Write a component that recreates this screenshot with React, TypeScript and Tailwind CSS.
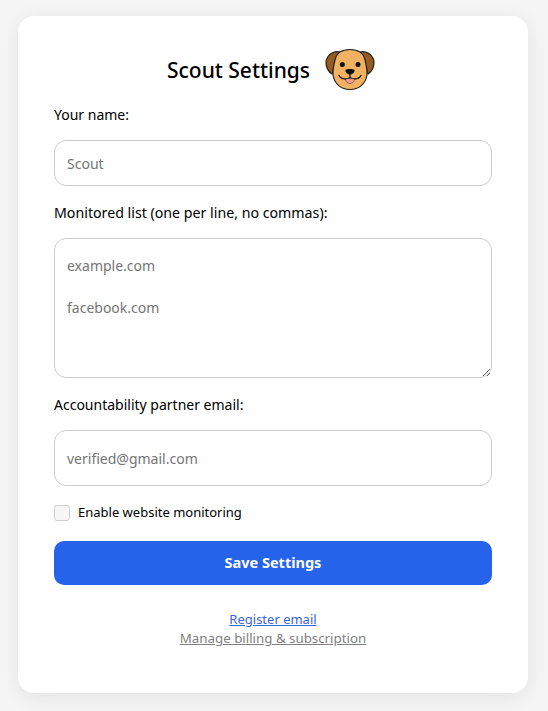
const font = "font-['Noto_Sans','Open_Sans',sans-serif]";

function DogIcon() {
  return (
    <svg width="50" height="44" viewBox="0 0 50 44" className="mr-1 shrink-0">
      <path d="M15 4 C9 2.500 3 6 1.200 12.500 C0.300 18 3 24 6.800 26 C9 22 10 12 15 4 Z" fill="#955b1f" stroke="#222" strokeWidth="1.200" />
      <path d="M35 4 C41 2.500 47 6 48.800 12.500 C49.700 18 47 24 43.200 26 C41 22 40 12 35 4 Z" fill="#955b1f" stroke="#222" strokeWidth="1.200" />
      <path d="M25 1.500 C18 1.500 11.500 4.500 10 12 C8.500 18 7.500 22 8 27 C9.500 36 16 41.500 25 41.500 C34 41.500 40.500 36 42 27 C42.500 22 41.500 18 40 12 C38.500 4.500 32 1.500 25 1.500 Z" fill="#f0b162" stroke="#222" strokeWidth="1.200" />
      <circle cx="17.300" cy="16.500" r="2.500" fill="#111" />
      <circle cx="33" cy="16.500" r="2.500" fill="#111" />
      <path d="M20.500 22 C22 20.800 28 20.800 29.500 22 C30 24.500 27 26.500 25 26.800 C23 26.500 20 24.500 20.500 22 Z" fill="#111" />
      <path d="M25 26 L25 30" stroke="#111" strokeWidth="1.200" />
      <path d="M14 27.500 C16.500 31.500 21 31.500 25 30 C29 31.500 33.500 31.500 36 27.500" fill="none" stroke="#111" strokeWidth="1.400" strokeLinecap="round" />
      <path d="M20.700 31 C20.500 37 29.500 37 29.300 31 C27 30.200 23 30.200 20.700 31 Z" fill="#f09a9a" stroke="#5a3a2a" strokeWidth="0.600" />
    </svg>
  );
}

export default function App() {
  return (
    <div className={`min-h-[711px] bg-[#f5f5f5] pt-4 pl-[18px] pr-5 pb-[18px] text-black ${font}`}>
      <div className="h-[677px] rounded-2xl bg-white px-9 pt-[32px] shadow-[0_4px_20px_rgba(0,0,0,0.08)]">
        <div className="flex h-11 items-center justify-center gap-[15px]">
          <h1 className="text-[21px] font-medium leading-7">Scout Settings</h1>
          <DogIcon />
        </div>

        <label className="mt-[13px] block text-sm leading-5">Your name:</label>
        <input
          placeholder="Scout"
          className="mt-[15px] block h-[46px] w-full rounded-xl border border-[#cccccc] px-3 text-sm outline-none placeholder:text-[#757575]"
        />

        <label className="mt-[17px] block text-[14.2px] leading-5">Monitored list (one per line, no commas):</label>
        <textarea
          placeholder={"example.com\n\nfacebook.com"}
          className="mt-[15px] block h-[140px] w-full rounded-xl border border-[#cccccc] px-3 py-4 text-sm leading-[21px] outline-none placeholder:text-[#757575]"
        />

        <label className="mt-[17px] block text-sm leading-5">Accountability partner email:</label>
        <input
          placeholder="verified@gmail.com"
          className="mt-[15px] block h-14 w-full rounded-xl border border-[#cccccc] px-3 text-sm outline-none placeholder:text-[#757575]"
        />

        <div className="mt-[17px] flex h-[19px] items-center gap-2">
          <span className="h-4 w-4 rounded-[3px] border border-[#d0d0d0] bg-[#f7f7f7]" />
          <span className="text-[13px]">Enable website monitoring</span>
        </div>

        <button className="mt-[19px] block h-11 w-full rounded-[10px] bg-[#2563eb] text-[14.5px] font-bold text-white">
          Save Settings
        </button>

        <div className="mt-[25px] flex flex-col items-center text-[13px] leading-[19px]">
          <a className="text-[#3b64d8] underline">Register email</a>
          <a className="text-[13.3px] text-[#808080] underline">Manage billing &amp; subscription</a>
        </div>
      </div>
    </div>
  );
}
